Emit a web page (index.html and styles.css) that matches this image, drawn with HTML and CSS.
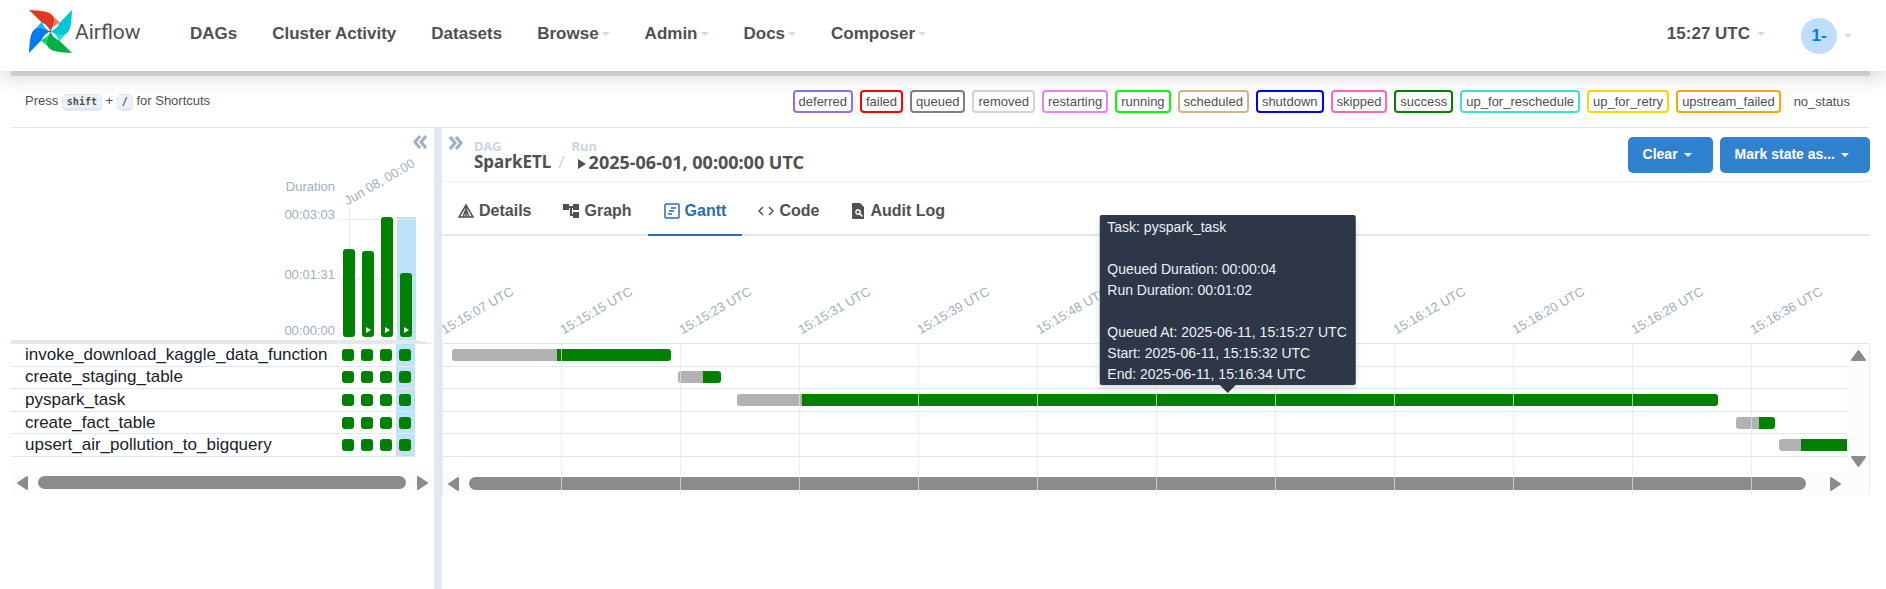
FILE: index.html
```html
<!DOCTYPE html>
<html lang="en">
<head>
<meta charset="utf-8">
<title>SparkETL - Grid - Airflow</title>
<link rel="stylesheet" href="styles.css">
</head>
<body>
<header class="navbar">
  <a class="brand" href="#">
    <svg class="brand-mark" viewBox="0 0 128 128" aria-hidden="true">
      <g fill="#00ad46" transform="rotate(180 64 64)"><path d="M0 0C38 2 62 3 73 20C79 35 70 50 64 64C60 52 50 42 38 37Z"/><path fill="#04d659" d="M73 20L92 38C78 44 68 52 64 64C70 50 79 35 73 20Z"/></g>
      <g fill="#017cee" transform="rotate(270 64 64)"><path d="M0 0C38 2 62 3 73 20C79 35 70 50 64 64C60 52 50 42 38 37Z"/><path fill="#0cb6ff" d="M73 20L92 38C78 44 68 52 64 64C70 50 79 35 73 20Z"/></g>
      <g fill="#00c7d4" transform="rotate(90 64 64)"><path d="M0 0C38 2 62 3 73 20C79 35 70 50 64 64C60 52 50 42 38 37Z"/><path fill="#11e1ee" d="M73 20L92 38C78 44 68 52 64 64C70 50 79 35 73 20Z"/></g>
      <g fill="#e43921"><path d="M0 0C38 2 62 3 73 20C79 35 70 50 64 64C60 52 50 42 38 37Z"/><path fill="#ff7557" d="M73 20L92 38C78 44 68 52 64 64C70 50 79 35 73 20Z"/></g>
      <circle cx="64" cy="64" r="2" fill="#51504f"/>
    </svg>
    <span>Airflow</span>
  </a>
  <nav class="menu">
    <a href="#">DAGs</a>
    <a href="#">Cluster Activity</a>
    <a href="#">Datasets</a>
    <a href="#">Browse<i class="caret"></i></a>
    <a href="#">Admin<i class="caret"></i></a>
    <a href="#">Docs<i class="caret"></i></a>
    <a href="#">Composer<i class="caret"></i></a>
  </nav>
  <div class="account">
    <button class="clock" type="button">15:27 UTC<i class="caret"></i></button>
    <button class="user" type="button"><span class="avatar">1-</span><i class="caret"></i></button>
  </div>
</header>

<main class="page">
  <section class="legend-bar">
    <p class="shortcut">Press <kbd>shift</kbd> + <kbd>/</kbd> for Shortcuts</p>
    <ul class="legend">
      <li class="deferred">deferred</li>
      <li class="failed">failed</li>
      <li class="queued">queued</li>
      <li class="removed">removed</li>
      <li class="restarting">restarting</li>
      <li class="running">running</li>
      <li class="scheduled">scheduled</li>
      <li class="shutdown">shutdown</li>
      <li class="skipped">skipped</li>
      <li class="success">success</li>
      <li class="reschedule">up_for_reschedule</li>
      <li class="retry">up_for_retry</li>
      <li class="upstream">upstream_failed</li>
      <li class="none">no_status</li>
    </ul>
  </section>

  <div class="panels">
    <section class="runs">
      <div class="runs-top">
        <button class="toggle" type="button" aria-label="Collapse grid"><svg viewBox="0 0 14 14"><path d="M7 1L2 7L7 13M13 1L8 7L13 13"/></svg></button>
      </div>
      <div class="chart">
        <div class="y-axis"><span>Duration</span><span>00:03:03</span><span>00:01:31</span><span>00:00:00</span></div>
        <div class="plot">
          <span class="date">Jun 08, 00:00</span>
          <div class="bars">
            <div class="run"><b class="bar" style="height:73%"></b></div>
            <div class="run"><b class="bar manual" style="height:72%"></b></div>
            <div class="run"><b class="bar manual" style="height:100%"></b></div>
            <div class="run selected"><b class="bar manual" style="height:53%"></b></div>
          </div>
        </div>
      </div>
      <div class="rule"><span></span><span></span></div>
      <table class="tasks">
        <tbody>
          <tr><th scope="row">invoke_download_kaggle_data_function</th><td><i></i></td><td><i></i></td><td><i></i></td><td><i></i></td></tr>
          <tr><th scope="row">create_staging_table</th><td><i></i></td><td><i></i></td><td><i></i></td><td><i></i></td></tr>
          <tr><th scope="row">pyspark_task</th><td><i></i></td><td><i></i></td><td><i></i></td><td><i></i></td></tr>
          <tr><th scope="row">create_fact_table</th><td><i></i></td><td><i></i></td><td><i></i></td><td><i></i></td></tr>
          <tr><th scope="row">upsert_air_pollution_to_bigquery</th><td><i></i></td><td><i></i></td><td><i></i></td><td><i></i></td></tr>
        </tbody>
      </table>
      <div class="scroll-x">
        <svg viewBox="0 0 11 14"><path d="M10 1V13L1 7Z"/></svg>
        <span class="thumb"></span>
        <svg viewBox="0 0 11 14"><path d="M1 1V13L10 7Z"/></svg>
      </div>
    </section>

    <div class="divider"></div>

    <section class="details">
      <div class="run-head">
        <button class="toggle" type="button" aria-label="Expand details"><svg viewBox="0 0 14 14"><path d="M1 1L6 7L1 13M7 1L12 7L7 13"/></svg></button>
        <ol class="crumbs">
          <li><small>DAG</small><a href="#">SparkETL</a></li>
          <li class="slash">/</li>
          <li><small>Run</small><a class="run-date" href="#"><svg viewBox="0 0 8 10"><path d="M0 0V10L8 5Z"/></svg>2025-06-01, 00:00:00 UTC</a></li>
        </ol>
        <div class="actions">
          <button type="button">Clear<i class="caret"></i></button>
          <button type="button">Mark state as...<i class="caret"></i></button>
        </div>
      </div>

      <nav class="tabs">
        <a href="#"><svg viewBox="0 0 16 16" class="line"><path d="M8 2L15 14H1ZM8 2V14M8 6L5 14M8 6L11 14"/></svg>Details</a>
        <a href="#"><svg viewBox="0 0 16 16" class="solid"><path d="M0 1H6V7H0ZM10 1H16V7H10ZM10 9H16V15H10ZM6 3H10V5H9V11H10V13H7V5H6Z"/></svg>Graph</a>
        <a href="#" class="active"><svg viewBox="0 0 16 16" class="line"><rect x="1" y="1" width="14" height="14" rx="1"/><path d="M7 5H12M5 8H10M4 11H8"/></svg>Gantt</a>
        <a href="#"><svg viewBox="0 0 16 16" class="line"><path d="M5 4L1 8L5 12M11 4L15 8L11 12"/></svg>Code</a>
        <a href="#"><svg viewBox="0 0 14 16" class="solid narrow"><path fill-rule="evenodd" d="M2 0H9L13 4V16H2Q1 16 1 15V1Q1 0 2 0ZM7 6A3 3 0 1 0 8.500 11.700L11 14L12 13L9.600 10.600A3 3 0 0 0 7 6ZM7 7.500A1.500 1.500 0 1 1 7 10.500A1.500 1.500 0 1 1 7 7.500Z"/></svg>Audit Log</a>
      </nav>

      <div class="time-axis">
        <span>15:15:07 UTC</span><span>15:15:15 UTC</span><span>15:15:23 UTC</span><span>15:15:31 UTC</span><span>15:15:39 UTC</span><span>15:15:48 UTC</span><span>15:15:56 UTC</span><span>15:16:04 UTC</span><span>15:16:12 UTC</span><span>15:16:20 UTC</span><span>15:16:28 UTC</span><span>15:16:36 UTC</span>
      </div>
      <div class="gantt">
        <div class="gantt-main">
          <div class="lanes">
            <div class="lane"><div class="span" style="margin-left:0.71%;width:15.59%"><b class="wait" style="width:48%"></b><b class="work"></b></div></div>
            <div class="lane"><div class="span" style="margin-left:16.8%;width:3.06%"><b class="wait" style="width:58%"></b><b class="work"></b></div></div>
            <div class="lane"><div class="span" style="margin-left:21%;width:69.82%"><b class="wait" style="width:6.6%"></b><b class="work"></b>
              <div class="tooltip" role="tooltip">
                <p>Task: pyspark_task</p>
                <p>Queued Duration: 00:00:04<br>Run Duration: 00:01:02</p>
                <p>Queued At: 2025-06-11, 15:15:27 UTC<br>Start: 2025-06-11, 15:15:32 UTC<br>End: 2025-06-11, 15:16:34 UTC</p>
              </div></div></div>
            <div class="lane"><div class="span" style="margin-left:92.1%;width:2.78%"><b class="wait" style="width:59%"></b><b class="work"></b></div></div>
            <div class="lane"><div class="span cut" style="margin-left:95.16%;width:4.84%"><b class="wait" style="width:32%"></b><b class="work"></b></div></div>
          </div>
          <div class="scroll-y">
            <svg viewBox="0 0 15 11"><path d="M7.500 1L14 10H1Z"/></svg>
            <svg viewBox="0 0 15 11"><path d="M7.500 10L14 1H1Z"/></svg>
          </div>
        </div>
        <div class="scroll-x wide">
          <svg viewBox="0 0 11 14"><path d="M10 1V13L1 7Z"/></svg>
          <span class="thumb"></span>
          <svg viewBox="0 0 11 14"><path d="M1 1V13L10 7Z"/></svg>
        </div>
        <div class="grid-lines"><i></i><i></i><i></i><i></i><i></i><i></i><i></i><i></i><i></i><i></i><i></i><i></i></div>
      </div>
    </section>
  </div>
</main>
</body>
</html>
```
FILE: styles.css
```css
* { box-sizing: border-box; }
html, body { height: 100%; }
body {
  margin: 0;
  display: flex;
  flex-direction: column;
  background: #fff;
  color: #51504f;
  font-family: "Liberation Sans", Arial, sans-serif;
  font-size: 13px;
}
a { color: inherit; text-decoration: none; }
button { border: 0; padding: 0; background: none; color: inherit; font: inherit; cursor: pointer; }
svg { display: block; flex: none; }
p, ul, ol { margin: 0; padding: 0; list-style: none; }

.caret {
  display: inline-block;
  border: 4px solid transparent;
  border-top-color: currentColor;
  border-bottom-width: 0;
}

/* navigation */
.navbar {
  position: relative;
  z-index: 2;
  display: flex;
  align-items: center;
  height: 71px;
  padding: 0 34px 0 29px;
  background: #fff;
  box-shadow: 0 5px 20px rgba(0, 0, 0, .18);
}
.brand { display: flex; align-items: center; gap: 3px; width: 143px; margin-bottom: 8px; font: 21px Roboto, sans-serif; }
.brand-mark { width: 43px; height: 43px; }
.menu { display: flex; gap: 35px; margin: 0 auto 4px 18px; font-size: 17px; font-weight: 700; }
.menu a, .clock, .user { display: flex; align-items: center; }
.navbar .caret { margin-left: 3px; color: #e4d5e6; }
.account { display: flex; align-items: center; gap: 36px; font-size: 17px; font-weight: 700; }
.clock { margin-bottom: 4px; }
.navbar .clock .caret, .navbar .user .caret { margin-left: 7px; }
.avatar { width: 36px; height: 36px; border-radius: 50%; background: #bfdefb; color: #017cee; line-height: 36px; }

/* legend */
.page { flex: 1; display: flex; flex-direction: column; margin: 0 16px 0 11px; border-top: 5px solid #e4e4e4; }
.legend-bar {
  display: flex;
  align-items: center;
  justify-content: space-between;
  height: 52px;
  padding: 0 14px;
  border-bottom: 1px solid #e2e8f0;
}
kbd {
  display: inline-block;
  padding: 0 4px;
  border: 1px solid #e2e8f0;
  border-bottom-width: 3px;
  border-radius: 5px;
  background: #edf2f7;
  font: 700 10px/13px "DejaVu Sans Mono", monospace;
}
.legend { display: flex; gap: 7px; }
.legend li { padding: 0 4px; border: 2px solid; border-radius: 4px; line-height: 19px; }
.legend .deferred { border-color: mediumpurple; }
.legend .failed { border-color: red; }
.legend .queued { border-color: gray; }
.legend .removed { border-color: lightgrey; }
.legend .restarting { border-color: violet; }
.legend .running { border-color: lime; }
.legend .scheduled { border-color: tan; }
.legend .shutdown { border-color: blue; }
.legend .skipped { border-color: hotpink; }
.legend .success { border-color: green; }
.legend .reschedule { border-color: turquoise; }
.legend .retry { border-color: gold; }
.legend .upstream { border-color: orange; }
.legend .none { border-color: transparent; }

.panels { flex: 1; display: flex; }
.divider { width: 8px; background: #e2e8f0; }
.toggle svg { width: 14px; height: 14px; fill: none; stroke: #a0aec0; stroke-width: 3; }

/* run grid */
.runs { width: 423px; }
.runs-top { display: flex; justify-content: flex-end; align-items: flex-start; height: 49px; padding: 7px; }
.chart { display: flex; height: 163px; }
.y-axis { width: 328px; padding-right: 4px; color: #a0aec0; text-align: right; line-height: 20px; }
.y-axis span { display: block; }
.y-axis span:nth-child(2) { margin: 8px 0 40px; }
.y-axis span:nth-child(4) { margin-top: 36px; }
.plot { position: relative; width: 77px; padding-top: 40px; }
.date {
  position: absolute;
  left: 10px;
  bottom: 132px;
  transform: rotate(-30deg);
  transform-origin: 0 100%;
  color: #a0aec0;
  white-space: nowrap;
}
.plot::before { content: ""; position: absolute; left: 10px; top: 31px; bottom: 3px; border-left: 1px solid #e2e8f0; }
.bars { position: relative; display: grid; grid-template-columns: repeat(4, 1fr); height: 123px; }
.bars::before {
  content: "";
  position: absolute;
  inset: 2px 0 5px;
  border: 1px solid rgba(226, 232, 240, .7);
  border-width: 1px 0;
  background: linear-gradient(rgba(226, 232, 240, .7), rgba(226, 232, 240, .7)) 0 59px / 100% 1px no-repeat;
}
.run { display: flex; align-items: flex-end; justify-content: center; padding-bottom: 3px; }
.selected { background: #bee3f8; }
.bar { position: relative; width: 12px; border-radius: 3px; background: green; }
.manual::after {
  content: "";
  position: absolute;
  left: 4px;
  bottom: 4px;
  border: 3px solid transparent;
  border-left: 5px solid #fff;
  border-right: 0;
}
.rule { display: flex; gap: 1px; }
.rule span { border-bottom: 4px solid #e2e8f0; width: 327px; }
.rule span + span { width: 95px; border-right: 18px solid transparent; }
.tasks { width: 404px; height: 113px; border-collapse: collapse; table-layout: fixed; font-size: 17px; color: #1a202c; }
.tasks th { width: 328px; padding: 0 0 0 14px; text-align: left; font-weight: 400; line-height: 20px; }
.tasks td { padding: 0 4px 0 3px; }
.tasks th, .tasks td { border-bottom: 1px solid #e2e8f0; }
.tasks td:last-child { background: #bee3f8; }
.tasks i { display: block; width: 12px; height: 12px; border-radius: 3px; background: green; }

/* scroll bars */
.scroll-x { display: flex; align-items: center; justify-content: space-between; height: 23px; margin-top: 14px; padding: 0 6px; background: #fcfcfc; }
.scroll-x svg { width: 11px; height: 14px; }
.scroll-x path, .scroll-y path { fill: #8b8b8b; stroke: #8b8b8b; stroke-width: 2; stroke-linejoin: round; }
.thumb { flex: 1; height: 13px; margin: 0 11px 0 10px; border-radius: 7px; background: #8b8b8b; }
.scroll-x.wide { margin-top: 0; padding-right: 29px; }
.wide .thumb { margin-right: 24px; }
.scroll-y { display: flex; flex-direction: column; justify-content: space-between; width: 23px; padding: 6px 0 5px 4px; background: #fcfcfc; }
.scroll-y svg { width: 15px; height: 11px; }

/* run header */
.details { flex: 1; }
.run-head { display: flex; height: 54px; padding: 8px 0 0 7px; border-bottom: 1px solid #edf2f7; }
.run-head .toggle { align-self: flex-start; }
.crumbs { display: flex; flex: 1; margin: 2px 0 0 11px; font: 700 17px/16px "Noto Sans", sans-serif; }
.crumbs small { display: block; color: #cbd5e0; font-size: 13px; line-height: 16px; }
.crumbs a { display: flex; align-items: center; }
.crumbs .run-date { font-size: 18px; }
.crumbs svg { width: 8px; height: 10px; margin: 3px 3px 0 6px; fill: #51504f; }
.crumbs .slash { margin: 16px 7px 0; color: #cbd5e0; font-weight: 400; }
.actions { display: flex; gap: 7px; align-items: flex-start; }
.actions button { display: flex; align-items: center; height: 36px; padding: 0 21px 3px 15px; margin-top: 1px; border-radius: 5px; background: #3182ce; color: #fff; font-size: 14px; font-weight: 700; }
.actions .caret { margin: 3px 0 0 6px; }

/* tabs */
.tabs { display: flex; height: 54px; border-bottom: 2px solid #e2e8f0; font-size: 16px; font-weight: 700; }
.tabs a { display: flex; align-items: center; gap: 5px; height: 54px; padding: 6px 16px 0; border-bottom: 2px solid transparent; }
.tabs .active { border-color: #2b6cb0; color: #2b6cb0; }
.tabs svg { width: 16px; height: 16px; }
.tabs .narrow { width: 14px; }
.line { fill: none; stroke: currentColor; stroke-width: 1.5; }
.solid { fill: currentColor; }

/* gantt */
.time-axis { display: grid; grid-template-columns: repeat(12, 1fr); align-items: end; height: 108px; padding-bottom: 6px; border-bottom: 1px solid #e2e8f0; color: #a0aec0; }
.time-axis span { margin-left: 4px; transform: rotate(-30deg); transform-origin: 0 100%; white-space: nowrap; }
.gantt { position: relative; }
.gantt-main { display: flex; height: 128px; }
.lanes { flex: 1; display: grid; grid-template-rows: repeat(5, 1fr); height: 113px; }
.lane { display: flex; align-items: center; border-bottom: 1px solid #e2e8f0; }
.span { position: relative; display: flex; height: 12px; }
.wait { border-radius: 3px 0 0 3px; background: #b2b2b2; }
.work { flex: 1; border-radius: 0 3px 3px 0; background: green; }
.cut .work { border-radius: 0; }
.grid-lines { position: absolute; inset: 0; display: grid; grid-template-columns: repeat(12, 1fr); pointer-events: none; }
.grid-lines i { border-left: 1px solid rgba(226, 232, 240, .7); }
.grid-lines i:last-child { border-right: 1px solid rgba(226, 232, 240, .7); }
.tooltip {
  position: absolute;
  z-index: 3;
  left: 50%;
  bottom: 21px;
  transform: translateX(-50%);
  padding: 2px 9px 0 8px;
  border-radius: 2px;
  background: #2d3748;
  box-shadow: 0 4px 6px rgba(0, 0, 0, .12);
  color: #edf0f4;
  font-size: 14px;
  line-height: 21px;
  white-space: nowrap;
}
.tooltip p + p { margin-top: 21px; }
.tooltip::after { content: ""; position: absolute; left: 50%; top: 100%; margin-left: -8px; border: 8px solid transparent; border-top-color: #2d3748; border-bottom: 0; }
```
